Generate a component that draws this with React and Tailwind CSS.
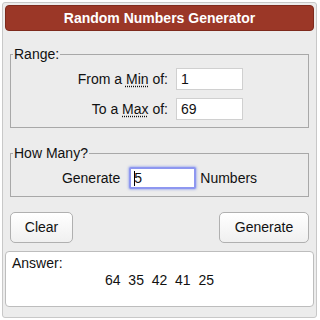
export default function App() {
  const font = { fontFamily: '"Liberation Sans", Arial, sans-serif' };
  return (
    <div className="w-[320px] h-[320px] bg-white" style={font}>
      <div className="ml-[2px] mt-[2px] w-[315px] h-[316px] border border-[#c8c8c8] rounded-[3px] bg-[#ececec] px-[2px] pt-[2px] text-[14px] text-[#111] flex flex-col">
        <div className="h-[26px] rounded-[4px] bg-[#9b3727] border border-[#7e2a1d] flex items-center justify-center text-white font-bold text-[14px]">
          Random Numbers Generator
        </div>

        <fieldset className="mt-[15px] mx-[5px] border border-[#a8a8a8] px-0 pt-[6px] pb-[7px]">
          <legend className="ml-[2px] px-[1px] leading-[16px] text-[14px]">Range:</legend>
          <div className="flex items-center h-[22px]">
            <div className="w-[157px] text-right">
              From a <span className="underline decoration-dotted underline-offset-2">Min</span> of:
            </div>
            <div className="ml-[8px] w-[67px] h-[22px] bg-white border border-[#d0d0d0] pl-[4px] leading-[20px]">1</div>
          </div>
          <div className="flex items-center h-[22px] mt-[8px]">
            <div className="w-[157px] text-right">
              To a <span className="underline decoration-dotted underline-offset-2">Max</span> of:
            </div>
            <div className="ml-[8px] w-[67px] h-[22px] bg-white border border-[#d0d0d0] pl-[4px] leading-[20px]">69</div>
          </div>
        </fieldset>

        <fieldset className="mt-[17px] mx-[5px] border border-[#a8a8a8] px-0 pt-[6px] pb-[7px]">
          <legend className="ml-[2px] px-[1px] leading-[16px] text-[14px]">How Many?</legend>
          <div className="flex items-center justify-center h-[22px]">
            <span>Generate</span>
            <div className="ml-[9px] w-[67px] h-[22px] bg-white border-2 border-[#8e97f0] rounded-[2px] shadow-[0_0_2px_1px_rgba(120,140,240,0.5)] pl-[3px] leading-[18px] flex items-center">
              <span className="w-px h-[15px] bg-black mr-[-1px]"></span>
              <span>5</span>
            </div>
            <span className="ml-[4px]">Numbers</span>
          </div>
        </fieldset>

        <div className="mt-[15px] mx-[5px] flex justify-between">
          <button className="w-[63px] h-[31px] rounded-[5px] border border-[#b0b0b0] bg-gradient-to-b from-white to-[#f0f0f0] text-[14px]">Clear</button>
          <button className="w-[90px] h-[31px] rounded-[5px] border border-[#b0b0b0] bg-gradient-to-b from-white to-[#f0f0f0] text-[14px]">Generate</button>
        </div>

        <div className="mt-[8px] h-[56px] bg-white border border-[#bdbdbd] rounded-[4px] pt-[3px] px-[6px] leading-[17px]">
          <div>Answer:</div>
          <div className="text-center whitespace-pre">64  35  42  41  25</div>
        </div>
      </div>
    </div>
  );
}
